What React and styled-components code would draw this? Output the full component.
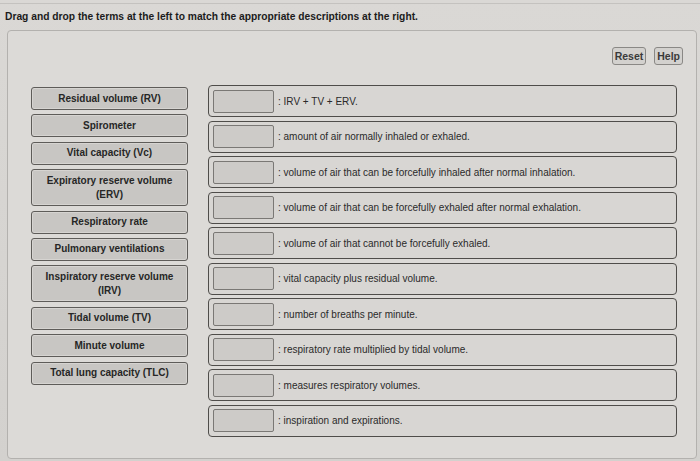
import React from "react";
import styled, { createGlobalStyle } from "styled-components";

const GlobalStyle = createGlobalStyle`
  html, body {
    margin: 0;
    padding: 0;
  }
  body {
    width: 700px;
    height: 461px;
    overflow: hidden;
    background: linear-gradient(180deg, #dad8d5 0%, #d3d1ce 100%);
    font-family: "Liberation Sans", Arial, sans-serif;
    color: #222;
  }
`;

const Page = styled.div`
  height: 461px;
  display: flex;
  flex-direction: column;
  border-top: 1px solid #c4c2bf;
  margin-top: 3px;
`;

const Title = styled.div`
  font-size: 10.25px;
  font-weight: bold;
  padding: 7px 0 0 5px;
  height: 19px;
  color: #1c1c1c;
`;

const Panel = styled.div`
  margin: 0 3px 6px 7px;
  flex: 1;
  border: 1px solid #b3b1ae;
  border-radius: 4px;
  background: #dcdad7;
  display: flex;
  flex-direction: column;
`;

const Toolbar = styled.div`
  display: flex;
  justify-content: flex-end;
  gap: 8px;
  padding: 16px 13px 0 0;
  height: 18px;
`;

const ToolButton = styled.button`
  font-family: "Liberation Sans", Arial, sans-serif;
  font-size: 10.5px;
  font-weight: bold;
  color: #3a3a3a;
  background: #d3d1ce;
  border: 1px solid #8a8885;
  border-radius: 3px;
  padding: 0 2px;
  height: 18px;
`;

const Content = styled.div`
  display: flex;
  gap: 20px;
  padding: 20px 19px 0 23px;
`;

const Terms = styled.div`
  width: 157px;
  display: flex;
  flex-direction: column;
  gap: 4.4px;
  padding-top: 2px;
`;

const Term = styled.div`
  box-sizing: border-box;
  padding: 3.5px 8px;
  border: 1px solid #5e5c59;
  border-radius: 3px;
  background: #c8c6c3;
  font-size: 10px;
  font-weight: bold;
  line-height: 14px;
  text-align: center;
  color: #262626;
  box-shadow: inset 0 0 0 1px #d6d4d1;
`;

const Rows = styled.div`
  flex: 1;
  display: flex;
  flex-direction: column;
  gap: 3.5px;
`;

const Row = styled.div`
  box-sizing: border-box;
  height: 32px;
  display: flex;
  align-items: center;
  gap: 4px;
  padding: 0 4px;
  border: 1.5px solid #4f4d4a;
  border-radius: 4px;
  background: #d8d6d3;
`;

const DropBox = styled.div`
  box-sizing: border-box;
  width: 61px;
  height: 23px;
  border: 1px solid #7a7875;
  border-radius: 2px;
  background: #cdcbc8;
  flex-shrink: 0;
`;

const Description = styled.span`
  font-size: 10px;
  color: #2a2a2a;
`;

const terms = [
  "Residual volume (RV)",
  "Spirometer",
  "Vital capacity (Vc)",
  "Expiratory reserve volume (ERV)",
  "Respiratory rate",
  "Pulmonary ventilations",
  "Inspiratory reserve volume (IRV)",
  "Tidal volume (TV)",
  "Minute volume",
  "Total lung capacity (TLC)",
];

const descriptions = [
  "IRV + TV + ERV.",
  "amount of air normally inhaled or exhaled.",
  "volume of air that can be forcefully inhaled after normal inhalation.",
  "volume of air that can be forcefully exhaled after normal exhalation.",
  "volume of air that cannot be forcefully exhaled.",
  "vital capacity plus residual volume.",
  "number of breaths per minute.",
  "respiratory rate multiplied by tidal volume.",
  "measures respiratory volumes.",
  "inspiration and expirations.",
];

export default function App() {
  return (
    <>
      <GlobalStyle />
      <Page>
        <Title>
          Drag and drop the terms at the left to match the appropriate
          descriptions at the right.
        </Title>
        <Panel>
          <Toolbar>
            <ToolButton>Reset</ToolButton>
            <ToolButton>Help</ToolButton>
          </Toolbar>
          <Content>
            <Terms>
              {terms.map((t) => (
                <Term key={t}>{t}</Term>
              ))}
            </Terms>
            <Rows>
              {descriptions.map((d) => (
                <Row key={d}>
                  <DropBox />
                  <Description>: {d}</Description>
                </Row>
              ))}
            </Rows>
          </Content>
        </Panel>
      </Page>
    </>
  );
}
